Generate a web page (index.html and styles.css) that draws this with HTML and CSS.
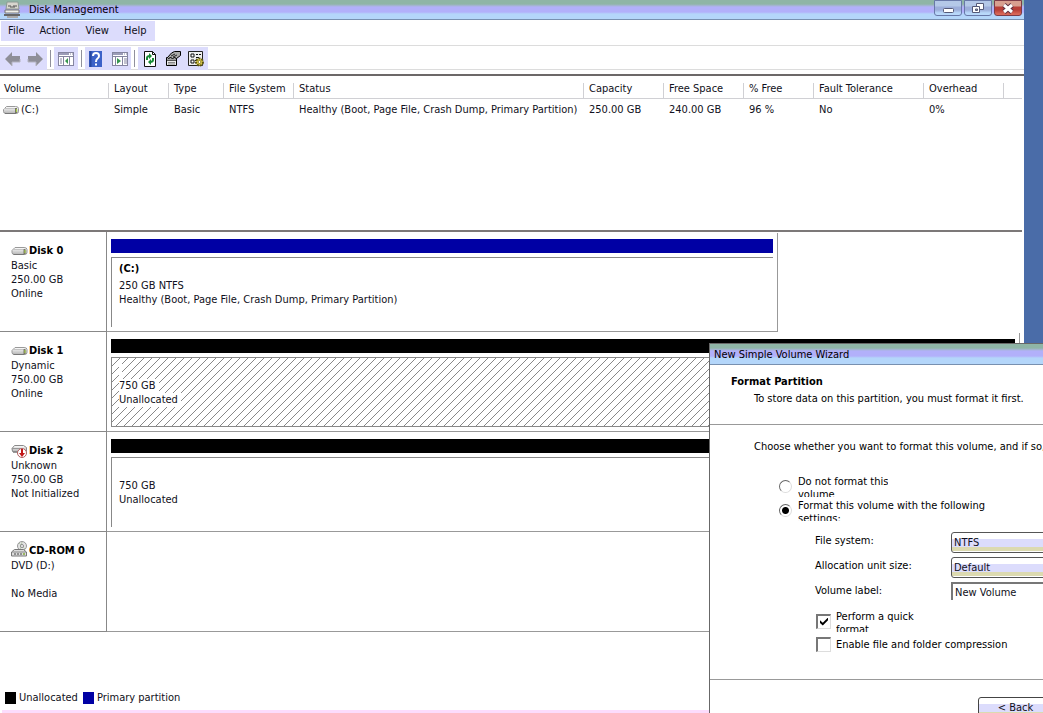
FILE: index.html
```html
<!DOCTYPE html>
<html lang="en">
<head>
<meta charset="utf-8">
<title>Disk Management</title>
<link rel="stylesheet" href="styles.css">
</head>
<body>
<svg class="defs" aria-hidden="true">
  <defs>
    <linearGradient id="metal" x1="0" y1="0" x2="0" y2="1"><stop offset="0" stop-color="#fff"/><stop offset="1" stop-color="#b4b4b4"/></linearGradient>
    <symbol id="drive" viewBox="0 0 16 10">
      <path d="M3.500 1.500h9q3 0 3 2v3q0 2-2.500 2h-10q-2.500 0-2.500-2v-2z" fill="url(#metal)" stroke="#999"/>
      <path d="M1 3.500h11" fill="none" stroke="#c4c4c4"/>
      <path d="M12 3h2v5h-2z" fill="#777766"/><path d="M13 4h1v3h-1z" fill="#a5cf3f"/>
      <path d="M2 8.500h11" stroke="#777"/>
    </symbol>
  </defs>
</svg>
<main class="window">
  <header class="titlebar">
    <svg class="app-icon" width="16" height="18" viewBox="0 0 16 18"><path d="M3 1h11l1 7H2z" fill="#d8d6ce" stroke="#8c9a94"/><path d="M4 5h3M9 5h4M6 6h5" stroke="#555"/><path d="M1 9h14v3H1z" fill="#f0f0ea" stroke="#777"/><path d="M0 13h16v2H0z" fill="#666"/><path d="M3 15h11v2H3z" fill="#aaa"/></svg>
    <h1 class="title">Disk Management</h1>
    <div class="controls">
      <button class="ctl" aria-label="Minimize"><svg width="26" height="14" viewBox="0 0 26 14"><rect x="8.500" y="7.500" width="10" height="4" rx="1" fill="#fff" stroke="#555a78"/></svg></button>
      <button class="ctl" aria-label="Restore"><svg width="26" height="14" viewBox="0 0 26 14"><path d="M11.500 2.500h7v6h-7z" fill="#fff" stroke="#555a78"/><path d="M7.500 5.500h7v6h-7z" fill="#fff" stroke="#555a78"/><path d="M10.500 8h2v1.500h-2z" fill="#9ab" stroke="#555a78"/></svg></button>
      <button class="ctl ctl-close" aria-label="Close"><svg width="26" height="14" viewBox="0 0 26 14"><path d="M9 4l8 7M17 4l-8 7" stroke="#5c3040" stroke-width="5"/><path d="M9 4l8 7M17 4l-8 7" stroke="#fff" stroke-width="3"/></svg></button>
    </div>
  </header>
  <nav class="menubar">
    <div class="menus"><button>File</button><button>Action</button><button>View</button><button>Help</button></div>
  </nav>
  <div class="toolbar">
    <div class="group group-nav">
      <button aria-label="Back"><svg width="18" height="18" viewBox="0 0 18 18"><path d="M1 9l7-7v4h8v6H8v4z" fill="#8e8e98"/><path d="M2 10l6 6v-4h8v-3" fill="none" stroke="#b4b4c0"/></svg></button>
      <button aria-label="Forward"><svg width="18" height="18" viewBox="0 0 18 18"><path d="M17 9l-7-7v4H2v6h8v4z" fill="#8e8e98"/><path d="M16 10l-6 6v-4H2v-3" fill="none" stroke="#b4b4c0"/></svg></button>
    </div>
    <span class="sep"></span>
    <div class="group">
      <button aria-label="Show or hide console tree"><svg width="18" height="18" viewBox="0 0 18 18"><rect x="1.500" y="2.500" width="15" height="13" fill="#fff" stroke="#8585a0"/><path d="M2 4h10" stroke="#9c9cb8" stroke-width="2"/><path d="M13 4h1M15 4h1M2 6.500h14M6.500 7v8M12.500 7v8M3 9h2M3 11h2M3 13h2" stroke="#8585a0"/><path d="M11 8v6l-3-3z" fill="#36964e"/></svg></button>
    </div>
    <span class="sep"></span>
    <div class="group group-pair">
      <button aria-label="Help"><svg width="18" height="18" viewBox="0 0 18 18"><rect x="2" y="1" width="13" height="16" fill="#3c62c8"/><path d="M3.500 1v16" stroke="#2546a0" stroke-width="2"/><path d="M6 6q0-3 3-3t3 3q0 1.500-1.500 2.500T9 12" fill="none" stroke="#fff" stroke-width="2"/><path d="M8 13.500h2v2H8z" fill="#fff"/></svg></button>
      <button aria-label="Show or hide action pane"><svg width="18" height="18" viewBox="0 0 18 18"><rect x="1.500" y="2.500" width="15" height="13" fill="#fff" stroke="#8585a0"/><path d="M2 4h10" stroke="#9c9cb8" stroke-width="2"/><path d="M13 4h1M15 4h1M2 6.500h14M4.500 7v8M11.500 7v8M13 9h3M13 11h3M13 13h3" stroke="#8585a0"/><path d="M6 8v6l4-3z" fill="#36964e"/></svg></button>
    </div>
    <span class="sep"></span>
    <div class="group group-tools">
      <button aria-label="Refresh"><svg width="18" height="18" viewBox="0 0 18 18"><path d="M3.500 1.500h8l3 3v12h-11z" fill="#fff" stroke="#111"/><path d="M11.500 1.500v3h3" fill="none" stroke="#111"/><path d="M6 10V8q0-2 3-2M12 8v2q0 2-3 2" fill="none" stroke="#168a34" stroke-width="2"/><path d="M8 3v6l3-3zM10 9v6l-3-3z" fill="#168a34"/></svg></button>
      <button aria-label="Properties"><svg width="18" height="18" viewBox="0 0 18 18"><path d="M2.500 7.500h10v8h-10z" fill="#e8e8e8" stroke="#000"/><path d="M3 9h9M3 10.500h9" stroke="#555"/><path d="M4 12.500h7M4 14h7" stroke="#888"/><path d="M3.500 7.500l4-4.500 3-1.500h6v4l-4 3-2-1-2 1-2-1-2 1z" fill="#aaa" stroke="#000"/><path d="M7 6l4-2M9 7l4-2" stroke="#222"/></svg></button>
      <button aria-label="Settings"><svg width="18" height="18" viewBox="0 0 18 18"><path d="M1.500 1.500h14v14h-14z" fill="#eee" stroke="#222"/><path d="M4 4h3v3H4zM4 10h3v3H4z" fill="#fff" stroke="#111"/><path d="M9 4.500h2M12 4.500h2M9 7.500h3M8 10.500h2" stroke="#111"/><circle cx="12.500" cy="12" r="3.500" fill="#e8d850" stroke="#5a5210" stroke-dasharray="2 1" stroke-width="2"/><circle cx="12.500" cy="12" r="1.500" fill="#fff" stroke="#8a7c18"/></svg></button>
    </div>
  </div>
  <section class="volumes">
    <table>
      <colgroup><col class="c-volume"><col class="c-layout"><col class="c-type"><col class="c-fs"><col class="c-status"><col class="c-size"><col class="c-size"><col class="c-pct"><col class="c-fault"><col class="c-size"><col></colgroup>
      <thead><tr><th>Volume</th><th>Layout</th><th>Type</th><th>File System</th><th>Status</th><th>Capacity</th><th>Free Space</th><th>% Free</th><th>Fault Tolerance</th><th>Overhead</th><th></th></tr></thead>
      <tbody><tr><td><span class="vol"><svg width="16" height="10"><use href="#drive"/></svg>(C:)</span></td><td>Simple</td><td>Basic</td><td>NTFS</td><td>Healthy (Boot, Page File, Crash Dump, Primary Partition)</td><td>250.00 GB</td><td>240.00 GB</td><td>96 %</td><td>No</td><td>0%</td><td></td></tr></tbody>
    </table>
  </section>
  <section class="disks">
    <article class="disk">
      <div class="info"><h2><svg width="17" height="10"><use href="#drive"/></svg>Disk 0</h2><p>Basic</p><p>250.00 GB</p><p>Online</p></div>
      <div class="map map-short"><div class="bar primary"></div><div class="part"><p class="name">(C:)</p><p>250 GB NTFS</p><p>Healthy (Boot, Page File, Crash Dump, Primary Partition)</p></div></div>
    </article>
    <article class="disk">
      <div class="info"><h2><svg width="17" height="10"><use href="#drive"/></svg>Disk 1</h2><p>Dynamic</p><p>750.00 GB</p><p>Online</p></div>
      <div class="map"><div class="bar"></div><div class="part hatched"><p class="name"></p><p>750 GB</p><p>Unallocated</p></div></div>
    </article>
    <article class="disk">
      <div class="info"><h2><svg width="17" height="14" viewBox="0 0 17 14"><path d="M3.500 1.500h9l3 2v4h-14q-2-3 2-6z" fill="url(#metal)" stroke="#8a8a8a"/><path d="M1 4.500h11M2 8.500h8" stroke="#999"/><circle cx="11" cy="9" r="4.500" fill="#fff" stroke="#b06060"/><path d="M10 5h2v4h2l-3 4-3-4h2z" fill="#c41818"/></svg>Disk 2</h2><p>Unknown</p><p>750.00 GB</p><p>Not Initialized</p></div>
      <div class="map"><div class="bar"></div><div class="part"><p class="name"></p><p>750 GB</p><p>Unallocated</p></div></div>
    </article>
    <article class="disk">
      <div class="info"><h2><svg class="cd" width="17" height="16" viewBox="0 0 17 16"><circle cx="11" cy="5" r="4.500" fill="#e4e4e4" stroke="#999"/><path d="M11 1l-2 8M8 2l6 6" stroke="#b8c8b0"/><circle cx="11" cy="5" r="1.500" fill="#fff" stroke="#888"/><path d="M3.500 8.500h9l3 2.500v4h-15v-4z" fill="#ddd" stroke="#777"/><path d="M1 11h14" stroke="#888"/><path d="M3 13h2M6 13h2M9 13h2" stroke="#444"/><path d="M12 12h2v2h-2z" fill="#9ab860"/></svg>CD-ROM 0</h2><p>DVD (D:)</p><p></p><p>No Media</p></div>
      <div class="map map-empty"></div>
    </article>
  </section>
  <footer class="legend"><span class="swatch"></span><span>Unallocated</span><span class="swatch primary"></span><span>Primary partition</span></footer>
  <div class="edge"></div>
</main>
<section class="wizard">
  <header class="titlebar wizard-title"><h2 class="title">New Simple Volume Wizard</h2></header>
  <div class="heading"><h3>Format Partition</h3><p>To store data on this partition, you must format it first.</p></div>
  <form class="form">
    <p class="lead">Choose whether you want to format this volume, and if so, what settings you want to use.</p>
    <div class="radios">
      <label class="choice"><input type="radio" name="fmt"><span class="clip">Do not format this<br>volume</span></label>
      <label class="choice"><input type="radio" name="fmt" checked><span class="clip">Format this volume with the following<br>settings:</span></label>
    </div>
    <div class="fields">
      <label for="fs">File system:</label><select id="fs"><option>NTFS</option></select>
      <label for="au">Allocation unit size:</label><select id="au"><option>Default</option></select>
      <label for="vl">Volume label:</label><input class="text" id="vl" type="text" value="New Volume">
    </div>
    <div class="checks">
      <label class="choice"><input type="checkbox" checked><span class="clip">Perform a quick<br>format</span></label>
      <label class="choice"><input type="checkbox"><span>Enable file and folder compression</span></label>
    </div>
    <div class="actions"><button type="button">&lt; Back</button></div>
  </form>
</section>
</body>
</html>
```
FILE: styles.css
```css
* { box-sizing: border-box; margin: 0; padding: 0; }
body, button, input, select, table { font: 11px/14px "DejaVu Sans Condensed", "DejaVu Sans", "Noto Sans", sans-serif; color: #101020; }
body { position: relative; height: 100vh; overflow: hidden; background: #4a6ca8; }
h1, h2, h3 { font-size: 11px; line-height: 14px; }
svg { display: block; flex: none; }
button { border: 0; background: none; }
.defs { position: absolute; width: 0; height: 0; }

.window { height: 100vh; margin-right: 19px; background: #fff; display: flex; flex-direction: column; }
.titlebar { display: flex; align-items: center; height: 20px; flex: none; border-bottom: 1px solid #7890b0; background: linear-gradient(#8fb5a6 0 4px, #a8b4dc 6px, #b2b0fa 7px 12px, #b4d6fa 14px 100%); }
.app-icon { margin-left: 4px; }
.title { margin-left: 9px; font-weight: normal; color: #000; }
.controls { display: flex; gap: 2px; margin-left: auto; padding-right: 2px; align-self: flex-start; }
.ctl { display: flex; align-items: center; justify-content: center; width: 28px; height: 16px; border: 1px solid #6878a8; border-radius: 0 0 3px 3px; background: linear-gradient(#b4c8e8 0 5px, #9caeda 6px 9px, #b8d8fa 12px); }
.ctl-close { border-color: #7c3c48; background: linear-gradient(#d8a090 0 5px, #b84038 6px 9px, #d86858 13px); }

.menubar { flex: none; height: 26px; padding: 1px; border-bottom: 1px solid #dcdcdc; }
.menus { display: inline-flex; height: 20px; padding: 0 8px 0 7px; gap: 15px; background: #dcdcfc; }
.toolbar { display: flex; flex: none; height: 30px; padding-top: 1px; border-bottom: 2px solid #6c6868; background: linear-gradient(#dcdcdc, #dcdcdc) 0 23px / 100% 1px no-repeat; }
.group { display: flex; align-items: center; height: 23px; padding: 0 3px; background: #dcdcfc; }
.group-nav { gap: 4px; padding: 0 3px 0 4px; }
.group-pair { padding: 0 2px; gap: 6px; }
.group-tools { gap: 5px; }
.sep { width: 1px; height: 17px; margin: 3px; background: #90909c; }

.volumes { flex: none; height: 156px; margin-right: 2px; border-bottom: 2px solid #7c7878; }
table { width: 100%; table-layout: fixed; border-collapse: separate; border-spacing: 0; }
th, td { text-align: left; font-weight: normal; white-space: nowrap; padding: 0 0 0 5px; }
th { height: 23px; padding-top: 3px; border: solid; border-image: linear-gradient(transparent 0 8px, #d0d0d4 8px) 1; border-width: 0 0 1px 1px; }
th:first-child { padding-left: 4px; border-width: 0 0 1px; }
td { height: 22px; padding-left: 6px; }
td:first-child { padding-left: 3px; }
.c-volume { width: 108px; }
.c-layout { width: 60px; }
.c-type { width: 55px; }
.c-fs { width: 70px; }
.c-status { width: 290px; }
.c-size { width: 80px; }
.c-pct { width: 70px; }
.c-fault { width: 110px; }
.vol { display: flex; align-items: center; gap: 2px; }

.disks { flex: none; }
.disk { display: flex; height: 100px; }
.info { width: 107px; flex: none; padding: 12px 0 0 11px; border-right: 1px solid #888; border-bottom: 1px solid #888; }
.info h2 { display: flex; align-items: center; height: 14px; margin-bottom: 1px; gap: 1px; white-space: nowrap; color: #000; }
.info p { height: 14px; }
.info .cd { margin-top: -5px; }
.map { flex: 1; margin: 1px 4px 0 0; padding: 6px 4px 5px; border-right: 1px solid #999; border-bottom: 1px solid #999; }
.map-short { flex: 0 1 671px; }
.map-empty { margin-right: 0; border-right: 0; }
.bar { height: 14px; margin-bottom: 4px; background: #000; }
.primary { background: #0000a4; }
.part { height: 70px; padding: 4px 7px; border-left: 1px solid #888; border-top: 1px solid #888; }
.part p { width: fit-content; padding-right: 3px; }
.part .name { height: 14px; margin-bottom: 3px; font-weight: bold; color: #000; }
.hatched { border-bottom: 1px solid #888; background: linear-gradient(135deg, transparent 45%, #888 50%, transparent 55%) 0 0 / 8px 8px; }
.hatched p { background: #fff; }

.legend { display: flex; align-items: center; gap: 3px; padding: 59px 5px 5px; }
.swatch { width: 11px; height: 12px; background: #000; }
.swatch.primary { margin-left: 2px; background: #0000a4; }
.edge { flex: 1; margin-left: 2px; background: #fcdcfc; }

.wizard { position: absolute; left: 709px; top: 343px; right: 0; bottom: 0; overflow: hidden; display: flex; flex-direction: column; background: #fff; border: solid #686868; border-width: 1px 0 0 1px; color: #000; }
.wizard label, .wizard h3 { color: #000; }
.wizard-title { height: 21px; padding-top: 1px; }
.wizard-title .title { margin-left: 4px; white-space: nowrap; }
.heading { flex: none; height: 60px; padding: 10px 0 0 21px; border-bottom: 1px solid #999; white-space: nowrap; }
.heading p { margin: 3px 0 0 23px; }
.form { flex: none; padding-top: 15px; white-space: nowrap; }
.lead { padding-left: 44px; }
.radios { padding: 21px 0 0 69px; display: grid; gap: 2px; }
.choice { display: flex; align-items: center; gap: 6px; }
.clip { height: 22px; line-height: 13px; overflow: hidden; }
input[type="radio"] { appearance: none; width: 13px; height: 13px; border: 1px solid #ddd; border-top-color: #666; border-left-color: #666; border-radius: 50%; background: #fff; }
input[type="radio"]:checked { background: radial-gradient(circle, #000 0 3px, #fff 4px); }
.fields { display: grid; grid-template-columns: 136px 160px; row-gap: 4px; padding: 11px 0 0 105px; }
.fields label { padding-top: 2px; }
select { appearance: none; height: 21px; padding: 0 2px; border: 1px solid #555; border-radius: 3px; background: linear-gradient(#fff 0 6px, #dcdcfc 6px 14px, #dcdab0 14px 18px, #fff 18px); }
.text { height: 18px; padding: 0 2px; border: 0 solid #777; border-width: 2px 0 0 2px; }
.checks { display: grid; gap: 5px; padding: 10px 0 0 106px; }
.checks .choice { gap: 5px; }
input[type="checkbox"] { appearance: none; width: 15px; height: 15px; border: 1px solid #ddd; border-top: 2px solid #777; border-left: 2px solid #777; background: #fff; }
input[type="checkbox"]:checked::before { content: ""; display: block; width: 8px; height: 8px; margin: 2px; background: #000; clip-path: polygon(0 35%, 35% 65%, 100% 0, 100% 35%, 35% 100%, 0 70%); }
.actions { margin-top: 27px; padding: 17px 0 0 268px; border-top: 1px solid #999; }
.actions button { width: 75px; height: 21px; border: 1px solid #444; border-radius: 3px; background: linear-gradient(#fff 0 6px, #dcdcfc 6px 14px, #dcdab0 14px 18px, #fff 18px); }
```
